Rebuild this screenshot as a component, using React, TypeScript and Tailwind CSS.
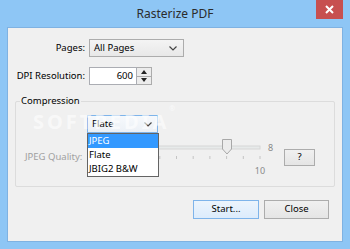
import React from 'react';

const font = { fontFamily: '"Noto Sans", "Open Sans", sans-serif' };

function Chevron() {
  return (
    <svg width="8" height="5" viewBox="0 0 8 5" className="shrink-0">
      <path d="M0.5 0.5 L4 4 L7.5 0.5" fill="none" stroke="#444" strokeWidth="1.2" />
    </svg>
  );
}

function Slider() {
  const ticks = [...Array(11)].map((_, i) => 7 + i * 16.7);
  return (
    <svg width="194" height="40" viewBox="0 0 194 40" className="shrink-0">
      <rect x="7" y="8" width="167" height="3" fill="#e7eaea" stroke="#d6d6d6" strokeWidth="1" />
      {ticks.map((x, i) => (
        <line key={i} x1={x} y1="18" x2={x} y2="21" stroke="#c4c4c4" strokeWidth="1" />
      ))}
      <path d="M136.5 1.5 H145.5 V11 L141 16 L136.5 11 Z" fill="#ececec" stroke="#a8a8a8" strokeWidth="1" />
      <text x="182" y="13" fontSize="9" fill="#8a8a8a" style={font}>8</text>
      <text x="174" y="36" fontSize="9" fill="#8a8a8a" textAnchor="middle" style={font}>10</text>
    </svg>
  );
}

export default function App() {
  return (
    <div className="w-[350px] h-[249px] bg-[#8ec6f5] flex flex-col relative overflow-hidden text-black" style={font}>
      {/* Title bar */}
      <div className="h-[27px] flex items-center justify-center relative shrink-0">
        <span className="text-[12px] text-[#2b2b2b] pt-[1px]">Rasterize PDF</span>
        <div className="absolute top-0 right-[7px] w-[27px] h-[19px] bg-[#c75050] flex items-center justify-center">
          <svg width="9" height="9" viewBox="0 0 9 9">
            <path d="M1 1 L8 8 M8 1 L1 8" stroke="#fff" strokeWidth="2" />
          </svg>
        </div>
      </div>

      {/* Body */}
      <div className="mx-[7px] mb-[7px] flex-1 border border-[#7fb2e2] bg-[#f0f0f0] flex flex-col">
        <div className="grid grid-cols-[77px_auto] gap-x-[4px] gap-y-[10px] mt-[11px] items-center text-[9.5px]">
          <span className="text-right">Pages:</span>
          <div className="w-[95px] h-[18px] border border-[#acacac] bg-gradient-to-b from-[#f4f4f4] to-[#e8e8e8] flex items-center justify-between pl-[4px] pr-[6px]">
            <span>All Pages</span>
            <Chevron />
          </div>
          <span className="text-right">DPI Resolution:</span>
          <div className="flex h-[18px]">
            <div className="w-[48px] border border-[#abadb3] bg-white flex items-center justify-end pr-[3px]">600</div>
            <div className="w-[15px] flex flex-col border border-l-0 border-[#acacac]">
              <div className="flex-1 bg-[#ececec] border-b border-[#acacac] flex items-center justify-center">
                <svg width="6" height="4" viewBox="0 0 6 4"><path d="M0 4 L3 0 L6 4 Z" fill="#222" /></svg>
              </div>
              <div className="flex-1 bg-[#ececec] flex items-center justify-center">
                <svg width="6" height="4" viewBox="0 0 6 4"><path d="M0 0 L3 4 L6 0 Z" fill="#222" /></svg>
              </div>
            </div>
          </div>
        </div>

        {/* Compression group */}
        <div className="mx-[7px] mt-[16px] h-[86px] border border-[#dcdcdc] rounded-[2px] relative text-[9.5px] flex flex-col">
          <span className="absolute -top-[8px] left-[4px] px-[1px] bg-[#f0f0f0]">Compression</span>
          <div className="ml-[71px] mt-[13px] w-[71px] h-[18px] relative z-10">
            <div className="h-full border border-[#7eb4ea] bg-gradient-to-b from-[#f6f9fc] to-[#ecf1f6] flex items-center justify-between pl-[4px] pr-[5px]">
              <span>Flate</span>
              <Chevron />
            </div>
            <div className="absolute top-full left-0 w-[72px] border border-[#646464] bg-white flex flex-col">
              <div className="h-[14px] bg-[#3399ff] text-white flex items-center pl-[1px]">JPEG</div>
              <div className="h-[14px] flex items-center pl-[1px]">Flate</div>
              <div className="h-[14px] flex items-center pl-[1px]">JBIG2 B&amp;W</div>
            </div>
          </div>
          <div className="flex items-start mt-[5px]">
            <span className="w-[70px] pl-[9px] mt-[13px] text-[#a0a0a0] leading-[12px]">JPEG Quality:</span>
            <Slider />
            <div className="ml-[4px] mt-[11px] w-[31px] h-[17px] border border-[#acacac] bg-gradient-to-b from-[#f0f0f0] to-[#e5e5e5] flex items-center justify-center">
              ?
            </div>
          </div>
        </div>

        {/* Buttons */}
        <div className="flex justify-end gap-[5px] mt-[13px] pr-[13px] text-[9.5px]">
          <div className="w-[66px] h-[19px] border border-[#7eb4ea] bg-gradient-to-b from-[#ecf4fc] to-[#dcecfc] flex items-center justify-center">
            Start...
          </div>
          <div className="w-[65px] h-[19px] border border-[#acacac] bg-gradient-to-b from-[#f0f0f0] to-[#e5e5e5] flex items-center justify-center">
            Close
          </div>
        </div>
      </div>

      {/* Watermark */}
      <div className="absolute left-[33px] top-[112px] z-20 text-[20px] font-bold tracking-[3px] text-white/60 pointer-events-none leading-none">
        SOFTPEDIA<sup className="text-[7px] align-top">®</sup>
      </div>
    </div>
  );
}
